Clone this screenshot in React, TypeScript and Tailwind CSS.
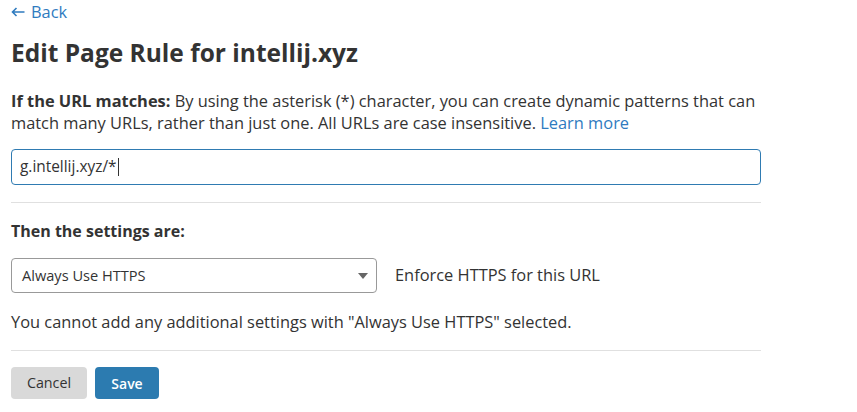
import React from "react";

const App = () => {
	return (
		<div className="min-h-screen bg-white pl-[11px] pr-[96px] text-[#333] font-['Open_Sans',sans-serif]">
			<a className="flex items-center gap-[6px] h-[24px] text-[16.4px] leading-[24px] text-[#2f7bbf]" href="#">
				<svg width="14" height="10" viewBox="0 0 14 10" fill="none" stroke="#2f7bbf" strokeWidth="1.6">
					<path d="M13.5 5H1.5M5.5 1 1.5 5l4 4" />
				</svg>
				<span>Back</span>
			</a>
			<h1 className="mt-[11px] text-[24.5px] font-bold leading-[36px] text-[#333]">
				Edit Page Rule for intellij.xyz
			</h1>
			<p className="mt-[19px] text-[16.4px] leading-[22px]">
				<span className="font-bold">If the URL matches:</span> By using the
				asterisk (*) character, you can create dynamic patterns that can match
				many URLs, rather than just one. All URLs are case insensitive.{" "}
				<a className="text-[#2f7bbf]" href="#">
					Learn more
				</a>
			</p>
			<div className="mt-[15px] flex h-[36px] items-center rounded-[4px] border border-[#2f7bb2] px-[8px] text-[15.4px]">
				g.intellij.xyz/*
				<span className="ml-[1px] h-[18px] w-px bg-[#333]" />
			</div>
			<hr className="mt-[17px] border-t border-[#e0e0e0]" />
			<h2 className="mt-[16px] text-[16px] font-bold leading-[24px]">
				Then the settings are:
			</h2>
			<div className="mt-[15px] flex items-center gap-[18px]">
				<div className="flex h-[35px] w-[366px] items-center justify-between rounded-[4px] border border-[#999] pl-[10px] pr-[8px] text-[14.6px]">
					<span>Always Use HTTPS</span>
					<svg width="10" height="6" viewBox="0 0 10 6">
						<path d="M0 0h10L5 6z" fill="#666" />
					</svg>
				</div>
				<span className="text-[16.4px]">Enforce HTTPS for this URL</span>
			</div>
			<p className="mt-[17px] text-[16.4px] leading-[24px]">
				You cannot add any additional settings with "Always Use HTTPS" selected.
			</p>
			<hr className="mt-[16px] border-t border-[#e0e0e0]" />
			<div className="mt-[16px] flex gap-[8px]">
				<button
					type="button"
					className="h-[32px] w-[76px] rounded-[4px] bg-[#d9d9d9] text-[14.3px] text-[#333]"
				>
					Cancel
				</button>
				<button
					type="button"
					className="h-[32px] w-[64px] rounded-[4px] bg-[#2c7bb0] text-[14px] font-semibold text-white"
				>
					Save
				</button>
			</div>
		</div>
	);
};

export default App;
